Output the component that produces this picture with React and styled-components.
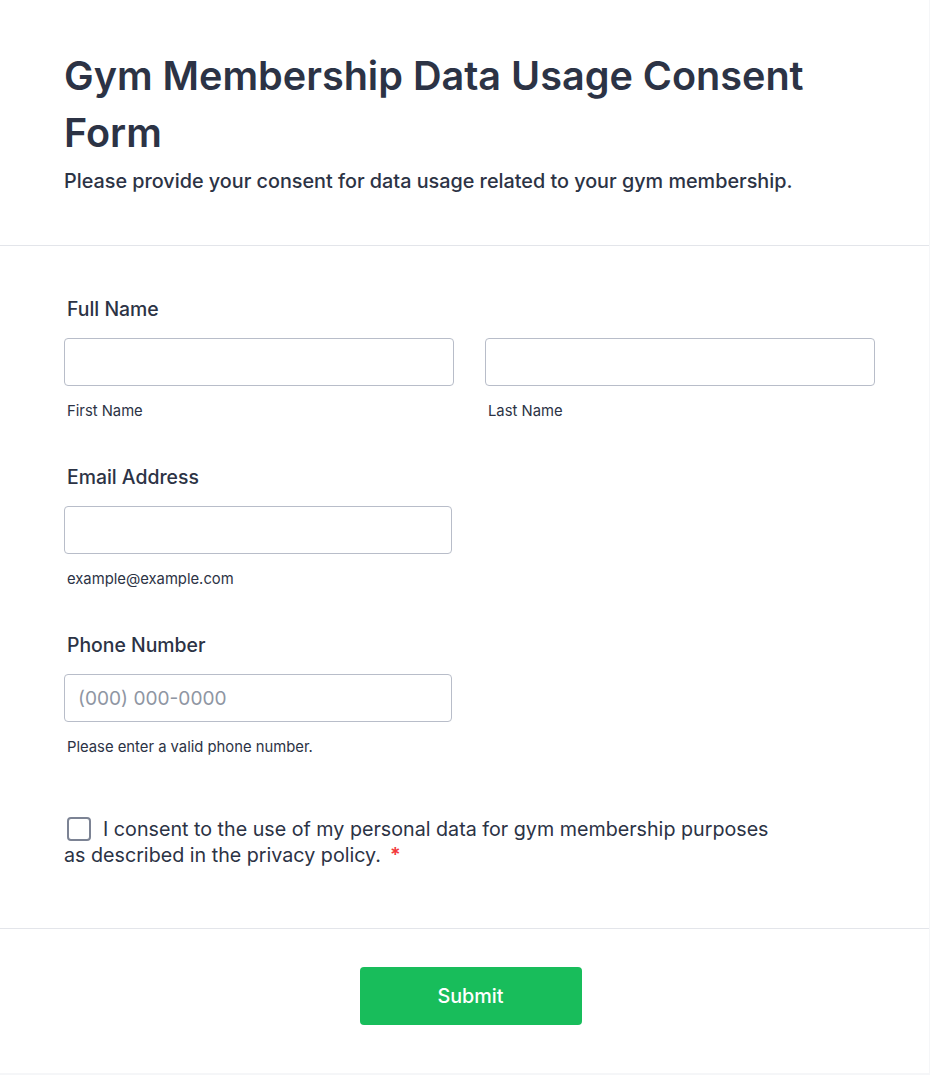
import React from "react";
import styled, { createGlobalStyle } from "styled-components";

const GlobalStyle = createGlobalStyle`
  body {
    margin: 0;
    background: #f5f6f8;
    font-family: Inter, "Noto Sans", sans-serif;
    color: #2c3345;
  }
  * {
    box-sizing: border-box;
  }
`;

const Card = styled.div`
  width: 929px;
  background: #ffffff;
  padding-bottom: 48px;
`;

const Header = styled.header`
  padding: 48px 64px 50px;
  border-bottom: 1px solid #e3e5ea;
`;

const Title = styled.h1`
  margin: 0;
  font-size: 39.6px;
  line-height: 57px;
  font-weight: 600;
  color: #2c3345;
  max-width: 790px;
`;

const Subtitle = styled.p`
  margin: 5px 0 0;
  font-size: 19.8px;
  line-height: 28px;
  font-weight: 500;
  color: #2c3345;
`;

const FormBody = styled.form`
  padding: 50px 54px 60px 64px;
  border-bottom: 1px solid #e3e5ea;
  display: flex;
  flex-direction: column;
`;

const Field = styled.div`
  display: flex;
  flex-direction: column;
  margin-bottom: ${(p) => p.$gap || 42}px;
`;

const Label = styled.label`
  padding-left: 3px;
  font-size: 19.4px;
  line-height: 27px;
  font-weight: 500;
  color: #2c3345;
  margin-bottom: 15px;
`;

const Row = styled.div`
  display: flex;
  gap: 31px;
`;

const InputGroup = styled.div`
  display: flex;
  flex-direction: column;
  flex-shrink: 0;
  width: ${(p) => p.$width}px;
`;

const Input = styled.input`
  height: 48px;
  width: 100%;
  border: 1px solid #b8bdc9;
  border-radius: 4px;
  padding: 0 13px;
  font-family: inherit;
  font-size: 19.1px;
  color: #2c3345;
  background: #fff;
  outline: none;

  &::placeholder {
    color: #8f96a3;
  }
`;

const SubLabel = styled.span`
  padding-left: 3px;
  margin-top: 14px;
  font-size: 14.8px;
  line-height: 22px;
  color: #2c3345;
`;

const Consent = styled.label`
  display: block;
  width: 720px;
  font-size: 19.7px;
  line-height: 26px;
  color: #2c3345;
`;

const Box = styled.input`
  appearance: none;
  width: 24px;
  height: 24px;
  margin: 0 12px 0 3px;
  border: 2px solid #7c8394;
  border-radius: 4px;
  vertical-align: -5px;
  background: #fff;
`;

const Required = styled.span`
  display: inline-block;
  color: #f23a3c;
  font-weight: 600;
  margin-left: 9px;
`;

const Footer = styled.div`
  display: flex;
  justify-content: center;
  padding: 38px 0 0 12px;
`;

const SubmitButton = styled.button`
  width: 222px;
  height: 58px;
  border: none;
  border-radius: 4px;
  background: #18bd5b;
  color: #ffffff;
  font-family: inherit;
  font-size: 19.8px;
  font-weight: 500;
  cursor: pointer;
`;

export default function App() {
  return (
    <>
      <GlobalStyle />
      <Card>
        <Header>
          <Title>Gym Membership Data Usage Consent Form</Title>
          <Subtitle>
            Please provide your consent for data usage related to your gym
            membership.
          </Subtitle>
        </Header>
        <FormBody onSubmit={(e) => e.preventDefault()}>
          <Field>
            <Label>Full Name</Label>
            <Row>
              <InputGroup $width={390}>
                <Input type="text" />
                <SubLabel>First Name</SubLabel>
              </InputGroup>
              <InputGroup $width={390}>
                <Input type="text" />
                <SubLabel>Last Name</SubLabel>
              </InputGroup>
            </Row>
          </Field>
          <Field>
            <Label>Email Address</Label>
            <InputGroup $width={388}>
              <Input type="email" />
              <SubLabel>example@example.com</SubLabel>
            </InputGroup>
          </Field>
          <Field $gap={58}>
            <Label>Phone Number</Label>
            <InputGroup $width={388}>
              <Input type="tel" placeholder="(000) 000-0000" />
              <SubLabel>Please enter a valid phone number.</SubLabel>
            </InputGroup>
          </Field>
          <Consent>
            <Box type="checkbox" />
            I consent to the use of my personal data for gym membership
            purposes as described in the privacy policy.
            <Required>*</Required>
          </Consent>
        </FormBody>
        <Footer>
          <SubmitButton type="submit">Submit</SubmitButton>
        </Footer>
      </Card>
    </>
  );
}
